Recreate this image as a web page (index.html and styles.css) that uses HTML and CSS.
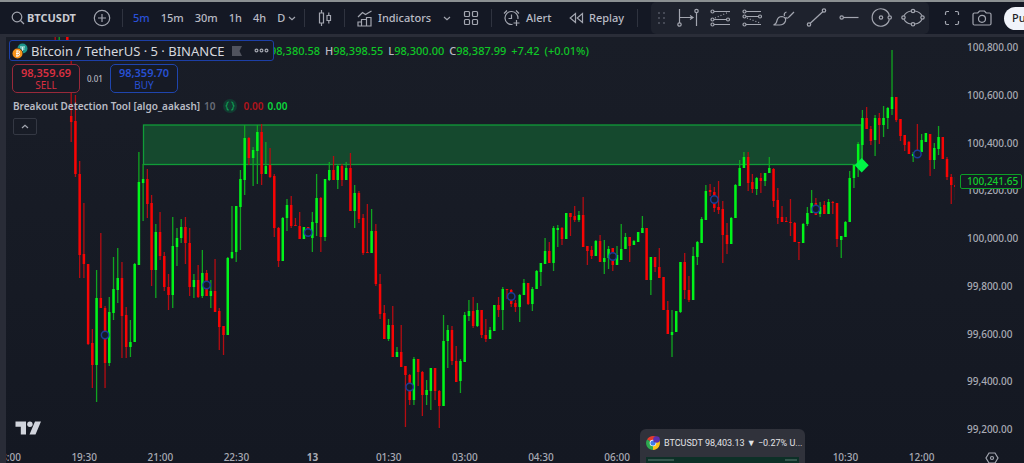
FILE: index.html
```html
<!DOCTYPE html>
<html lang="en">
<head>
<meta charset="utf-8">
<title>BTCUSDT chart</title>
<link rel="stylesheet" href="styles.css">
</head>
<body>
<div class="app">
  <header class="toolbar">
    <button class="tool symbol"><svg class="icon" width="14" height="14" viewBox="0 0 14 14"><circle cx="6" cy="6" r="4.8"/><path d="M9.5 9.5L13 13"/></svg><span>BTCUSDT</span></button>
    <button class="tool compare" aria-label="Compare"><svg class="icon" width="18" height="18" viewBox="0 0 18 18"><circle cx="9" cy="9" r="7.7"/><path d="M9 5v8M5 9h8"/></svg></button>
    <span class="divider"></span>
    <nav class="intervals">
      <button class="tool active">5m</button><button class="tool">15m</button><button class="tool">30m</button><button class="tool">1h</button><button class="tool">4h</button><button class="tool">D</button>
    </nav>
    <button class="tool chevron" aria-label="More intervals"><svg class="icon" width="8" height="5" viewBox="0 0 8 5"><path d="M1 1l3 2.6L7 1"/></svg></button>
    <span class="divider"></span>
    <button class="tool style" aria-label="Chart style"><svg class="icon" width="14" height="18" viewBox="0 0 14 18"><path d="M1.5 4h4v10h-4zM3.5 1v3M3.5 14v3M9 6.500h3.500v5H9zM10.800 3.500v3M10.800 11.500v3"/></svg></button>
    <span class="divider"></span>
    <button class="tool indicators"><svg class="icon" width="16" height="17" viewBox="0 0 16 17"><path d="M1 7l4.500-4.500 3 2L14.500 1M1 16v-4h3.500v4zM4.500 16v-6.500h5V16M9.500 16V7.500H14V16zM1 16h13.500"/></svg><span>Indicators</span></button>
    <button class="tool chevron" aria-label="Favorite indicators"><svg class="icon" width="8" height="5" viewBox="0 0 8 5"><path d="M1 1l3 2.600L7 1"/></svg></button>
    <button class="tool templates" aria-label="Templates"><svg class="icon" width="16" height="16" viewBox="0 0 16 16"><rect x="1.500" y="1.500" width="5" height="5" rx="1"/><rect x="9.500" y="1.500" width="5" height="5" rx="1"/><rect x="1.500" y="9.500" width="5" height="5" rx="1"/><rect x="9.500" y="9.500" width="5" height="5" rx="1"/></svg></button>
    <span class="divider"></span>
    <button class="tool alert"><svg class="icon" width="18" height="18" viewBox="0 0 18 18"><path d="M14.900 10A6.500 6.500 0 1 0 9.500 15.400M8.500 5.500V9.500H5.500M1 4.500L4 1.500M13 1.500l3 3M13.500 11v6M10.500 14h6"/></svg><span>Alert</span></button>
    <button class="tool replay"><svg class="icon" width="15" height="12" viewBox="0 0 15 12"><path d="M6.500 1.500v9L1.200 6zM13.500 1.500v9L8.200 6z"/></svg><span>Replay</span></button>
    <span class="divider"></span>
    <button class="tool undo" aria-label="Undo"><svg class="icon" width="14" height="10" viewBox="0 0 14 10"><path d="M0 4h10q3 0 3 4"/></svg></button>
    <div class="right">
      <button class="tool" aria-label="Fullscreen"><svg class="icon" width="16" height="16" viewBox="0 0 16 16"><path d="M1.500 5V3q0-1.500 1.500-1.500h2M11 1.500h2q1.500 0 1.500 1.500v2M14.500 11v2q0 1.500-1.500 1.500h-2M5 14.500H3q-1.500 0-1.500-1.500v-2"/></svg></button>
      <button class="tool" aria-label="Snapshot"><svg class="icon" width="20" height="16" viewBox="0 0 20 16"><path d="M2.500 3h3.300L7.500 1h5l1.700 2h3.300q1.500 0 1.500 1.500v9q0 1.500-1.500 1.500h-15Q1 15 1 13.500v-9Q1 3 2.500 3z"/><circle cx="10" cy="8.800" r="3.500"/></svg></button>
      <button class="publish">Publish</button>
    </div>
    <div class="drawbar">
      <svg class="grip" width="8" height="12" viewBox="0 0 8 12"><path d="M0 0h2v2H0zM5 0h2v2H5zM0 5h2v2H0zM5 5h2v2H5zM0 10h2v2H0zM5 10h2v2H5z"/></svg>
      <div class="drawings">
        <button class="tool" aria-label="Date range"><svg class="icon" width="24" height="20" viewBox="0 0 24 20"><path d="M3.500 1v14M4 9.500h12M14 7.500l3 2-3 2M20.500 5v13"/><circle cx="3.500" cy="16.500" r="1.700"/><circle cx="20.500" cy="3" r="1.700"/></svg></button>
        <button class="tool" aria-label="Long position"><svg class="icon" width="24" height="20" viewBox="0 0 24 20"><path d="M6 3.500h16M6 11.500h12M6 16.500h16"/><path class="dots" d="M7 10l14-6"/><circle cx="4.500" cy="3.500" r="1.500"/><circle cx="4.500" cy="11.500" r="1.500"/><circle cx="4.500" cy="16.500" r="1.500"/><circle cx="20" cy="11.500" r="1.500"/></svg></button>
        <button class="tool" aria-label="Short position"><svg class="icon" width="24" height="20" viewBox="0 0 24 20"><path d="M6 3.500h15M6 8.500h12M6 16.500h15"/><path class="dots" d="M7 10l13 5"/><circle cx="4.500" cy="3.500" r="1.500"/><circle cx="4.500" cy="8.500" r="1.500"/><circle cx="4.500" cy="16.500" r="1.500"/><circle cx="20" cy="8.500" r="1.500"/></svg></button>
        <button class="tool" aria-label="Brush"><svg class="icon" width="24" height="20" viewBox="0 0 24 20"><path d="M1.500 17q3-1 3.500-4.500Q6 8.500 10 8.500q4.500 1 3.500 4.500-1.500 4-6 4zM12.500 8q-1-3 2-4M13.500 9.500q2 1.500 3.500-.5L22 4"/></svg></button>
        <button class="tool" aria-label="Trend line"><svg class="icon" width="24" height="20" viewBox="0 0 24 20"><path d="M5 15.500L18 3.500"/><circle cx="4" cy="16.500" r="1.700"/><circle cx="19" cy="2.500" r="1.700"/></svg></button>
        <button class="tool" aria-label="Horizontal ray"><svg class="icon" width="24" height="20" viewBox="0 0 24 20"><path d="M6.500 9.500h15"/><circle cx="4.700" cy="9.500" r="1.700"/></svg></button>
        <button class="tool" aria-label="Circle"><svg class="icon" width="24" height="20" viewBox="0 0 24 20"><path d="M20.300 7.500A8.700 8.700 0 1 0 20.300 11.500"/><circle cx="12" cy="9.500" r="1.700"/><circle cx="20.700" cy="9.500" r="1.700"/></svg></button>
        <button class="tool" aria-label="Ellipse"><svg class="icon" width="24" height="20" viewBox="0 0 24 20"><path d="M3 7.800q2-4 7-4.800M14 3q5 .8 7 4.800M21 11.200q-2 4-7 4.800M10 16q-5-.8-7-4.800"/><circle cx="12" cy="3" r="1.700"/><circle cx="12" cy="16.300" r="1.700"/><circle cx="2.500" cy="9.500" r="1.700"/><circle cx="21.500" cy="9.500" r="1.700"/></svg></button>
      </div>
    </div>
  </header>

  <main class="workspace">
    <div class="pane">
      <div class="plot">
        <svg id="chart" class="chart" viewBox="6 37 949 412" role="img" aria-label="BTCUSDT 5 minute candles">
          <rect class="zone" x="143.500" y="125" width="718" height="39.500"/>
          <g id="candles"></g>
          <path class="signal" d="M861.700 158l7 7.200-7 7.200-7-7.200z"/>
          <path class="logo" d="M15.500 421.500h10.500v13h-5.200v-7.700h-5.300zM35 421.500h6l-5.500 13h-6z"/>
          <circle class="logo" cx="29.900" cy="424.200" r="2.700"/>
        </svg>
        <section class="legend">
          <div class="row title-row">
            <div class="title">
              <svg width="16" height="16" viewBox="0 0 16 16"><circle cx="10.500" cy="5.500" r="5" fill="#1c958c"/><path d="M8 4h5M10.500 4v4M8.500 6h4" stroke="#d5f0ec"/><circle cx="5.500" cy="10.500" r="5.500" fill="#161a25"/><circle cx="5.500" cy="10.500" r="5" fill="#f7931a"/><path d="M4.500 8h2q1.300.1 1 1.300-.2 1-1.300 1 1.600.2 1.300 1.500-.3 1.200-1.500 1.200h-2M5 7.500v6M4 10.400h2.500" stroke="#fff" fill="none"/></svg>
              <h1>Bitcoin / TetherUS · 5 · BINANCE</h1>
              <svg class="flag" width="10" height="10" viewBox="0 0 10 10"><path d="M0 0h10L7.500 5 10 10H0z"/></svg>
              <button class="more" aria-label="More"><svg class="icon" width="15" height="5" viewBox="0 0 15 5"><circle cx="2.500" cy="2.500" r="1.400"/><circle cx="7.500" cy="2.500" r="1.400"/><circle cx="12.500" cy="2.500" r="1.400"/></svg></button>
            </div>
            <div class="ohlc"><span><b>98,380.58</b></span><span>H<b>98,398.55</b></span><span>L<b>98,300.00</b></span><span>C<b>98,387.99</b></span><b>+7.42</b><b>(+0.01%)</b></div>
          </div>
          <div class="row trade">
            <button class="order sell"><strong>98,359.69</strong><span>SELL</span></button>
            <span class="spread">0.01</span>
            <button class="order buy"><strong>98,359.70</strong><span>BUY</span></button>
          </div>
          <div class="row study">
            <span>Breakout Detection Tool [algo_aakash]</span><span class="dim">10</span>
            <svg class="braces" width="14" height="14" viewBox="0 0 14 14"><circle cx="7" cy="7" r="7"/><path d="M5.800 3Q4 3 4 5T2.500 7Q4 7 4 9t1.800 2M8.200 3Q10 3 10 5t1.500 2Q10 7 10 9t-1.800 2"/></svg>
            <b class="down">0.00</b><b class="up">0.00</b>
          </div>
          <button class="collapse" aria-label="Collapse legend"><svg class="icon" width="8" height="5" viewBox="0 0 8 5"><path d="M1 4l3-2.800L7 4"/></svg></button>
        </section>
      </div>
      <div class="time-axis"><span class="tick">18:00</span><span class="tick">19:30</span><span class="tick">21:00</span><span class="tick">22:30</span><span class="tick day">13</span><span class="tick">01:30</span><span class="tick">03:00</span><span class="tick">04:30</span><span class="tick">06:00</span><span class="tick">07:30</span><span class="tick">09:00</span><span class="tick">10:30</span><span class="tick">12:00</span></div>
    </div>
    <aside class="price-axis">
      <div class="prices"><span>100,800.00</span><span>100,600.00</span><span>100,400.00</span><span>100,200.00</span><span>100,000.00</span><span>99,800.00</span><span>99,600.00</span><span>99,400.00</span><span>99,200.00</span></div>
      <button class="settings" aria-label="Axis settings"><svg class="icon" width="14" height="12" viewBox="0 0 14 12"><path d="M4 1h6l3 5-3 5H4L1 6z"/><circle cx="7" cy="6" r="1.500"/></svg></button>
      <span class="last">100,241.65</span>
    </aside>
  </main>

  <div class="preview">
    <div class="preview-head">
      <svg width="14" height="14" viewBox="0 0 14 14"><path d="M7 7L1 3.500A7 7 0 0 1 13 3.500z" fill="#e33b2e"/><path d="M7 7L1 3.500A7 7 0 0 0 7 14z" fill="#2da94f"/><path d="M7 7l6-3.500A7 7 0 0 1 7 14z" fill="#fbc116"/><circle cx="7" cy="7" r="3.300" fill="#fff"/><circle cx="7" cy="7" r="2.600" fill="#3f7de8"/><circle cx="10.500" cy="3.500" r="3.300" fill="#5a2fb0"/></svg>
      <span>BTCUSDT 98,403.13 ▼ −0.27% U...</span>
    </div>
    <div class="thumb"><i></i><i></i></div>
  </div>
</div>
<script src="chart.js"></script>
</body>
</html>
```
FILE: styles.css
```css
* { box-sizing: border-box; }
body {
  margin: 0;
  background: #161a25;
  color: #b9bbc4;
  font-family: "Noto Sans", "Open Sans", sans-serif;
  font-size: 10px;
  line-height: 14px;
}
button {
  margin: 0;
  padding: 0;
  border: 0;
  background: none;
  color: inherit;
  font: inherit;
}
.app {
  position: relative;
  height: 100vh;
  overflow: hidden;
  display: flex;
  flex-direction: column;
  border-top: 2px solid #8b9092;
}
.icon {
  display: block;
  flex: none;
  fill: none;
  stroke: #a3a6b0;
  stroke-width: 1.2;
}
.dots { stroke-dasharray: 1 2; }

.toolbar {
  position: relative;
  flex: none;
  display: flex;
  align-items: center;
  height: 32px;
  padding-left: 11px;
  background: #141824;
  font-size: 11px;
  font-weight: 500;
  white-space: nowrap;
}
.tool { display: flex; align-items: center; gap: 5px; }
.symbol { gap: 2px; width: 82px; font-weight: 700; color: #c9cbd2; }
.compare { width: 29px; }
.divider { flex: none; width: 1px; height: 18px; background: #2f333f; }
.intervals { display: flex; gap: 11px; margin-left: 10px; width: 155px; }
.active { color: #2a50d8; }
.chevron { width: 16px; }
.style { width: 39px; padding-left: 13px; }
.indicators { width: 98px; padding-left: 12px; }
.templates { width: 32px; padding-left: 4px; }
.alert { width: 77px; padding-left: 11px; }
.replay { width: 68px; }
.undo { margin-left: 13px; }
.right { display: flex; align-items: center; gap: 12px; width: 80px; margin-left: auto; }
.publish {
  height: 23px;
  padding: 0 8px;
  border-radius: 12px;
  background: #f0f3fa;
  color: #1b1e28;
  font-size: 11px;
}
.drawbar {
  position: absolute;
  top: 0;
  right: 95px;
  display: flex;
  align-items: center;
  gap: 17px;
  width: 278px;
  height: 32px;
  padding-left: 7px;
  border-radius: 5px;
  background: #1e222d;
}
.grip { fill: #454955; }
.drawings { display: flex; justify-content: space-between; width: 249px; margin-left: -7px; }

.workspace {
  flex: 1;
  display: flex;
  min-height: 0;
  overflow: hidden;
  border-top: 3px solid #2a2d38;
  border-left: 6px solid #292c37;
  background: linear-gradient(#191d27, #141822);
}
.pane { flex: 1; min-width: 0; display: flex; flex-direction: column; }
.plot { position: relative; flex: 1; min-height: 0; overflow: hidden; }
.chart { display: block; width: 100%; }
.zone { fill: #15492e; stroke: #109c38; stroke-width: 1.3; }
.signal { fill: #00f545; }
.logo { fill: #d1d4dc; }
.up-bar { fill: #00f51a; }
.up-wick { fill: #10a520; }
.down-bar { fill: #f80404; }
.down-wick { fill: #b50c12; }
.event { fill: #151a28; stroke: #1a3c98; stroke-width: 1.5; }

.legend { position: absolute; top: 3px; left: 3px; }
.row { display: flex; align-items: center; }
.title {
  z-index: 1;
  display: flex;
  align-items: center;
  width: 265px;
  height: 21px;
  padding-left: 2px;
  border: 1px solid #1d3fa6;
  border-radius: 3px;
  background: #161a25;
}
.title h1 { margin: 0 0 0 3px; width: 201px; font-size: 13px; line-height: 18px; font-weight: 400; color: #d6d8de; white-space: nowrap; }
.flag { fill: #50535e; }
.more { margin-left: 12px; }
.ohlc { display: flex; gap: 5px; margin-left: -4px; white-space: nowrap; font-size: 11px; font-weight: 500; }
.ohlc b { font-weight: 500; color: #0fc626; }
.trade { gap: 7px; margin: 3px 0 0 3px; }
.order {
  display: flex;
  flex-direction: column;
  align-items: center;
  justify-content: center;
  width: 68px;
  height: 29px;
  border: 1px solid;
  border-radius: 5px;
  background: #161a25;
  line-height: 12px;
}
.order strong { font-size: 11px; font-weight: 600; }
.order span { font-size: 10px; }
.sell { border-color: #98293a; color: #d92f40; }
.buy { border-color: #1f45ae; color: #2750d2; }
.spread { width: 16px; font-size: 8px; font-weight: 500; }
.study { gap: 4px; margin: 6px 0 0 4px; white-space: nowrap; font-weight: 600; }
.dim { color: #686c77; }
.braces { margin: 0 3px; fill: #123a31; }
.braces path { fill: none; stroke: #109b50; stroke-width: 1.2; }
.down { color: #b3141b; font-weight: 600; }
.up { color: #0bd63c; font-weight: 600; }
.collapse {
  display: flex;
  align-items: center;
  justify-content: center;
  width: 24px;
  height: 17px;
  margin: 5px 0 0 4px;
  border: 1px solid #343843;
  border-radius: 2px;
}

.time-axis {
  flex: none;
  display: flex;
  height: 14px;
  margin-left: -36px;
  overflow: hidden;
  line-height: 17px;
  font-weight: 500;
  color: #a9abb5;
}
.tick { flex: 0 0 7.73%; text-align: center; }
.day { font-weight: 700; }

.price-axis { position: relative; flex: none; width: 69px; display: flex; flex-direction: column; }
.prices {
  flex: 1;
  display: flex;
  flex-direction: column;
  justify-content: space-between;
  padding: 3px 0 16px 12px;
  font-weight: 500;
  color: #a9abb5;
}
.settings { height: 11px; padding-left: 30px; }
.last {
  position: absolute;
  top: 137px;
  left: 5px;
  width: 62px;
  padding-left: 6px;
  border: 1px solid #0d9f26;
  border-radius: 2px;
  background: #161a25;
  color: #13cf2b;
  line-height: 13px;
  font-weight: 500;
}

.preview {
  position: absolute;
  left: 640px;
  bottom: 0;
  width: 165px;
  height: 34px;
  padding: 7px 6px 0;
  border-radius: 6px 6px 0 0;
  background: #30323b;
  color: #e2e3e6;
}
.preview-head { display: flex; align-items: center; gap: 4px; height: 14px; white-space: nowrap; font-family: Roboto, "Noto Sans", sans-serif; font-size: 9px; }
.preview-head svg { flex: none; }
.thumb { display: flex; justify-content: space-between; align-items: center; height: 6px; margin-top: 7px; padding: 0 2px; background: #0d3027; }
.thumb i { width: 26px; height: 2px; background: #35574e; }
.thumb i + i { width: 12px; }
```
FILE: chart.js
```js
const SVG = "http://www.w3.org/2000/svg";
const FIRST_X = 71.2;
const STEP = 4.231;

// direction, high, body top, body bottom, low
const data = `
R 60 116 122 142|R 95 121 174 177|R 161 174 255 278|R 203 254 264 278|R 264 264 344 345|R 329 343 365 388|G 270 298 365 402|R 233 298 308 308|R 306 308 363 388|G 297 312 363 366
G 257 289 313 320|G 248 278 290 303|R 262 278 316 358|R 307 315 347 358|G 320 342 347 357|G 263 264 342 342|G 152 182 265 265|G 164 179 183 221|R 169 179 204 218|R 195 203 270 286
G 224 232 270 298|R 212 232 256 260|R 252 256 287 291|R 274 287 295 310|G 217 246 295 308|G 228 238 247 266|G 219 227 238 243|R 217 227 243 264|R 228 243 287 296|G 274 280 287 298
R 265 280 297 298|G 250 273 296 298|R 270 273 296 296|G 280 291 296 308|R 259 291 312 312|R 308 311 327 350|R 326 326 335 355|G 257 258 335 335|G 206 252 258 259|G 206 206 252 262
G 170 179 207 250|G 125 138 180 195|R 137 138 158 165|G 147 150 158 186|G 125 132 151 184|R 124 132 174 185|G 142 166 174 174|R 148 165 177 178|R 174 176 228 237|R 227 228 261 267
G 217 218 261 261|G 199 205 218 231|R 196 205 226 228|R 218 225 226 226|R 212 226 239 239|G 227 227 239 239|R 227 227 235 235|G 212 222 238 252|G 174 198 223 236|R 197 198 237 252
G 179 179 237 241|G 162 170 180 181|R 156 170 180 180|G 165 166 180 189|R 164 166 180 186|G 162 168 180 180|R 153 168 211 211|G 185 193 211 228|R 191 193 219 223|R 214 218 253 255
R 204 252 253 253|G 209 231 253 253|R 224 231 284 286|R 274 284 314 319|R 305 313 339 339|G 319 325 339 341|R 306 325 357 357|G 347 352 357 357|R 325 352 367 367|R 366 366 375 427
R 374 375 400 405|G 357 359 400 405|R 359 359 372 386|R 371 372 395 416|G 380 390 395 405|G 368 368 391 410|R 368 368 391 400|R 390 391 406 428|G 315 341 406 406|G 325 330 341 368
R 326 330 361 365|R 346 361 382 382|G 359 361 381 393|G 312 315 362 362|G 300 311 316 321|R 297 311 326 328|G 303 310 326 327|R 310 310 335 338|R 319 335 339 342|G 327 330 339 339
G 305 305 331 331|R 297 305 310 317|G 287 289 310 330|R 289 289 290 299|R 289 290 304 307|R 300 303 307 312|G 294 295 307 322|G 279 283 295 295|R 283 283 304 305|G 287 289 304 311
G 270 271 289 289|G 263 263 272 286|G 238 251 264 264|R 242 251 263 263|G 226 228 263 271|G 225 228 230 247|R 227 228 239 245|G 213 213 239 239|R 213 213 217 236|R 206 216 220 222
G 211 215 220 222|R 197 215 247 247|R 246 246 251 265|R 246 250 256 259|G 240 241 256 256|R 235 241 262 262|G 240 258 262 274|G 246 249 258 269|R 248 248 265 271|G 246 255 265 265
G 224 249 260 260|G 233 237 249 249|R 237 237 246 262|G 240 241 245 245|G 232 232 242 242|G 216 228 233 233|R 228 228 280 280|G 257 257 280 295|R 257 257 267 272|R 248 267 278 278
R 277 277 310 310|R 301 310 334 334|G 310 332 335 357|G 311 311 332 332|G 262 262 312 313|R 253 262 290 299|R 276 290 300 302|G 247 256 300 300|G 241 242 257 265|G 217 219 243 243
G 185 191 220 220|R 184 190 192 196|R 187 192 208 212|R 181 207 210 214|R 201 209 235 263|R 223 235 244 254|G 217 218 244 244|G 184 185 218 218|G 160 168 186 186|G 152 157 168 168
R 152 157 183 191|R 174 182 189 193|G 177 178 189 195|R 173 178 181 193|G 173 173 181 186|G 157 168 173 173|R 168 169 201 207|R 188 200 218 224|R 206 217 222 222|R 217 221 222 222
R 199 222 223 236|R 222 223 242 242|R 242 242 243 260|G 223 224 243 243|G 207 213 224 226|G 190 203 213 213|R 198 203 215 215|G 202 207 214 217|R 201 205 214 214|G 199 202 214 214
R 201 202 203 214|R 203 203 239 247|G 236 236 240 258|G 221 222 237 237|G 171 178 222 222|G 164 165 178 188|G 142 144 165 177|G 110 118 145 165|R 107 118 129 129|R 126 129 141 145
G 115 118 140 156|R 113 118 125 144|G 106 118 125 137|G 107 108 118 129|G 50 97 109 115|R 97 97 120 122|R 119 119 136 141|R 135 135 145 151|R 141 142 154 154|G 152 154 156 162
R 124 150 155 155|G 134 140 152 152|G 133 133 142 142|R 134 134 160 176|G 143 148 160 169|G 126 137 149 155|R 137 137 159 159|R 157 159 177 180|R 174 177 185 204|R 177 185 187 200|G 180 181 186 186
`.trim().split(/[|\n]/);

// index of the candle each event marker belongs to, and its height
const events = [[8, 335], [32, 285], [56, 232.5], [80, 387], [104, 296.5], [128, 256.5], [152, 199.5], [176, 209], [200, 154]];

const layer = document.getElementById("candles");

function add(name, attrs) {
  const node = document.createElementNS(SVG, name);
  for (const key in attrs) node.setAttribute(key, attrs[key]);
  layer.appendChild(node);
}

function bar(kind, x, width, top, bottom) {
  add("rect", { class: kind, x: x - width / 2, y: top, width: width, height: Math.max(1, bottom - top) });
}

bar("down-wick", 55.2, 1.3, 37, 40);
bar("up-wick", 59.2, 1.3, 37, 40);
bar("down-bar", 67.3, 2.5, 37, 41);

data.forEach(function (entry, i) {
  const [dir, high, top, bottom, low] = entry.split(" ");
  const x = FIRST_X + i * STEP;
  const kind = dir === "G" ? "up" : "down";
  bar(kind + "-wick", x, 1.3, +high, +low);
  bar(kind + "-bar", x, 2.5, +top, +bottom);
});

events.forEach(function ([i, y]) {
  add("circle", { class: "event", cx: FIRST_X + i * STEP, cy: y, r: 3.7 });
});
```
